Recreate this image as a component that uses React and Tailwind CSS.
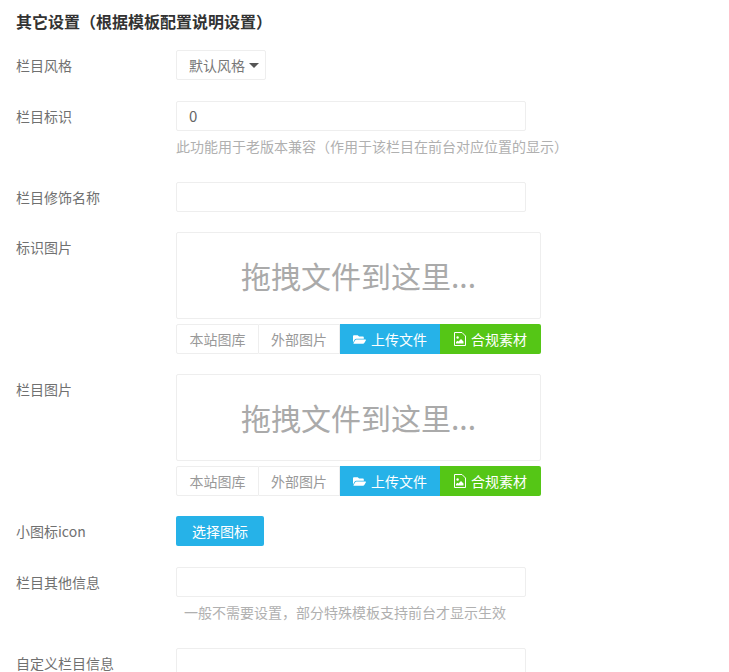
import { FaFolderOpen } from 'react-icons/fa'

const font = 'font-["Noto_Sans_CJK_SC",sans-serif]'

function Row({ label, top, children }) {
  return (
    <div className={`flex ${top}`}>
      <label className="w-40 shrink-0 pt-[5px] text-sm leading-5 text-[#707070]">{label}</label>
      <div>{children}</div>
    </div>
  )
}

function TextInput({ value }) {
  return (
    <div className="h-[30px] w-[350px] rounded-[2px] border border-[#eee] bg-white px-3 text-[15px] leading-7 text-[#666]">
      {value}
    </div>
  )
}

function Help({ children, indent }) {
  return <p className={`mt-[5px] mb-px h-5 text-sm leading-5 text-[#b0b0b0] ${indent ? 'pl-2' : ''}`}>{children}</p>
}

// file-image outline with a small picture inside
function FileImageIcon() {
  return (
    <svg viewBox="0 0 12 14" className="h-[14px] w-[12px]">
      <path d="M.5.5h7.5l3.500 3.500v9.500h-11z" fill="none" stroke="currentColor" />
      <circle cx="3.600" cy="5.500" r="1.200" fill="currentColor" />
      <path d="M2 11.500v-1.500l1.500-1.200 1 .8 2.500-2.600 2.500 2.500v2z" fill="currentColor" />
    </svg>
  )
}

function Uploader() {
  return (
    <div className="w-[365px]">
      <div className="flex h-[87px] items-center justify-center rounded-[2px] border border-[#eee] bg-white text-[30px] text-[#aaa]">
        拖拽文件到这里...
      </div>
      <div className="mt-[5px] flex h-[30px] text-sm leading-none">
        <button className="w-[83px] rounded-l-[2px] border border-[#eee] bg-white text-[#999]">本站图库</button>
        <button className="w-[81px] border border-l-0 border-[#eee] bg-white text-[#999]">外部图片</button>
        <button className="flex w-[100px] items-center justify-center gap-[5px] bg-[#26b2e8] text-white">
          <FaFolderOpen className="h-[13px] w-[13px]" />
          上传文件
        </button>
        <button className="flex w-[101px] items-center justify-center gap-[5px] rounded-r-[2px] bg-[#55c616] text-white">
          <FileImageIcon />
          合规素材
        </button>
      </div>
    </div>
  )
}

export default function App() {
  return (
    <div className={`h-[672px] overflow-hidden bg-white px-4 pt-[10px] ${font}`}>
      <h3 className="text-base leading-[22px] font-bold text-[#333]">其它设置（根据模板配置说明设置）</h3>

      <Row label="栏目风格" top="mt-[18px]">
        <button className="flex h-[30px] w-[90px] items-center rounded-[2px] border border-[#eee] bg-white pl-3 text-sm text-[#777]">
          默认风格
          <span className="ml-[4px] h-0 w-0 border-x-[5px] border-t-[5px] border-x-transparent border-t-[#555]" />
        </button>
      </Row>

      <Row label="栏目标识" top="mt-[21px]">
        <TextInput value="0" />
        <Help>此功能用于老版本兼容（作用于该栏目在前台对应位置的显示）</Help>
      </Row>

      <Row label="栏目修饰名称" top="mt-[25px]">
        <TextInput />
      </Row>

      <Row label="标识图片" top="mt-[20px]">
        <Uploader />
      </Row>

      <Row label="栏目图片" top="mt-[20px]">
        <Uploader />
      </Row>

      <Row label="小图标icon" top="mt-[20px]">
        <button className="h-[30px] w-[88px] rounded-[2px] bg-[#26b2e8] text-sm text-white">选择图标</button>
      </Row>

      <Row label="栏目其他信息" top="mt-[21px]">
        <TextInput />
        <Help indent>一般不需要设置，部分特殊模板支持前台才显示生效</Help>
      </Row>

      <Row label="自定义栏目信息" top="mt-[25px]">
        <TextInput />
      </Row>
    </div>
  )
}
